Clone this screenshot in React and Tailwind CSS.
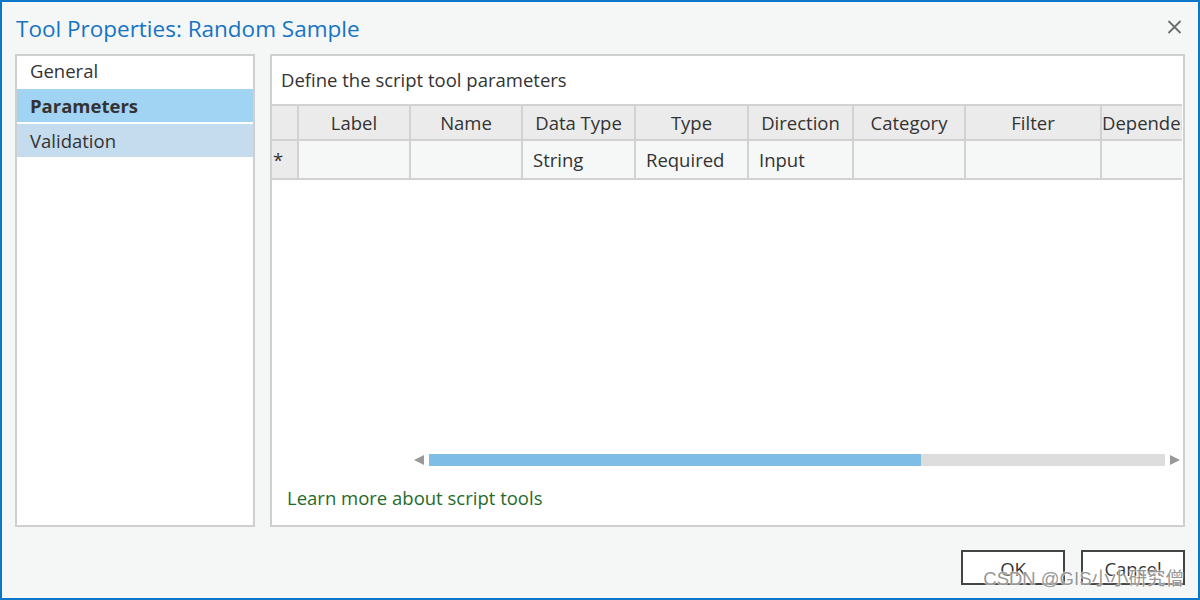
import React from 'react';

const cols = [
  { name: 'Label', w: 'w-[110px]' },
  { name: 'Name', w: 'w-[110px]' },
  { name: 'Data Type', w: 'w-[111px]', v: 'String' },
  { name: 'Type', w: 'w-[111px]', v: 'Required' },
  { name: 'Direction', w: 'w-[103px]', v: 'Input' },
  { name: 'Category', w: 'w-[110px]' },
  { name: 'Filter', w: 'w-[134px]' },
  { name: 'Dependency', w: 'w-[80px]' },
];

const App = () => {
  return (
    <div
      className="w-[1200px] h-[600px] bg-[#f5f7f7] border-2 border-[#0a78c8] relative flex flex-col text-[#333] overflow-hidden"
      style={{ fontFamily: '"Open Sans", "Noto Sans", sans-serif' }}
    >
      {/* title bar */}
      <div className="h-[52px] flex items-start justify-between pl-[14px] pr-[16px]">
        <h1 className="mt-[12px] text-[22.5px] leading-[30px] text-[#1574c4]">Tool Properties: Random Sample</h1>
        <svg className="mt-[18px]" width="15" height="14" viewBox="0 0 15 14">
          <path d="M1.5 1 L13.5 13 M13.5 1 L1.5 13" stroke="#6b6b6b" strokeWidth="1.8" />
        </svg>
      </div>

      <div className="flex gap-[15px] px-[13px] h-[473px]">
        {/* left nav */}
        <div className="w-[240px] border-2 border-[#cfcfcf] bg-white text-[18.5px]">
          <div className="h-[33px] pl-[13px] leading-[29px]">General</div>
          <div className="h-[33px] pl-[13px] leading-[33px] bg-[#a0d4f2] font-bold">Parameters</div>
          <div className="h-[33px] pl-[13px] leading-[33px] mt-[2px] bg-[#c5dcee]">Validation</div>
        </div>

        {/* right panel */}
        <div className="flex-1 border-2 border-[#cfcfcf] bg-white flex flex-col overflow-hidden">
          <div className="h-[48px] pl-[9px] pt-[11px] text-[18.5px] leading-[26px]">Define the script tool parameters</div>

          <div className="overflow-hidden">
            <div className="flex flex-col gap-[2px] py-[2px] bg-[#d2d2d2] w-max text-[18.5px]">
              <div className="flex gap-[2px] h-[33px]">
                <div className="w-[25px] bg-[#ebebeb]" />
                {cols.map((c) => (
                  <div key={c.name} className={`${c.w} bg-[#ebebeb] text-center whitespace-nowrap overflow-hidden leading-[34px]`}>
                    {c.name}
                  </div>
                ))}
              </div>
              <div className="flex gap-[2px] h-[37px]">
                <div className="w-[25px] bg-[#ebebeb] leading-[38px] pl-[1px]">*</div>
                {cols.map((c) => (
                  <div key={c.name} className={`${c.w} bg-[#f6f8f8] pl-[10px] whitespace-nowrap leading-[38px]`}>
                    {c.v || ''}
                  </div>
                ))}
              </div>
            </div>
          </div>

          <div className="flex-1" />

          {/* horizontal scrollbar */}
          <div className="flex items-center h-[12px] pl-[142px] pr-[3px]">
            <svg width="11" height="12" viewBox="0 0 11 12">
              <path d="M0 6 L10 1 L10 11 Z" fill="#999" />
            </svg>
            <div className="flex-1 h-[12px] mx-[4px] bg-[#dddddd] flex">
              <div className="w-[492px] h-full bg-[#7dbde6]" />
            </div>
            <svg width="11" height="12" viewBox="0 0 11 12">
              <path d="M11 6 L1 1 L1 11 Z" fill="#999" />
            </svg>
          </div>

          <div className="h-[59px] pl-[15px] pt-[20px]">
            <span className="text-[18.5px] leading-[24px] text-[#1f6b2a]">Learn more about script tools</span>
          </div>
        </div>
      </div>

      {/* buttons */}
      <div className="flex-1 flex justify-end items-start gap-[16px] pr-[13px] pt-[23px]">
        <button className="w-[104px] h-[35px] border-2 border-[#444] bg-white text-[18.5px] leading-[31px] pt-[1px]">OK</button>
        <button className="w-[104px] h-[35px] border-2 border-[#444] bg-white text-[18.5px] leading-[31px] pt-[1px]">Cancel</button>
      </div>

      <div
        className="absolute right-[14px] bottom-[5px] text-[18.5px] text-[#8a8a8a]/90 whitespace-nowrap"
        style={{ fontFamily: '"Liberation Sans", "Noto Sans CJK SC", sans-serif', textShadow: '0 0 2px #fff, 0 0 2px #fff' }}
      >
        CSDN @GIS小小研究僧
      </div>
    </div>
  );
};

export default App;
